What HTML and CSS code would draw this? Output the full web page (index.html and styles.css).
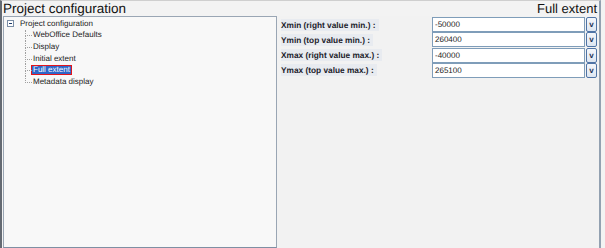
FILE: index.html
```html
<!DOCTYPE html>
<html lang="en">
<head>
    <meta charset="UTF-8">
    <meta name="viewport" content="width=device-width, initial-scale=1.0">
    <title>Project configuration</title>
    <link rel="stylesheet" href="styles.css">
</head>
<body>
    <div class="window">
        <div class="header">
            <span class="title">Project configuration</span>
            <span class="subtitle">Full extent</span>
        </div>

        <div class="main">
            <div class="tree">
                <div class="root">
                    <span class="expander"></span>
                    <span class="node">Project configuration</span>
                </div>
                <ul class="children">
                    <li><span class="node">WebOffice Defaults</span></li>
                    <li><span class="node">Display</span></li>
                    <li><span class="node">Initial extent</span></li>
                    <li><span class="node selected">Full extent</span></li>
                    <li><span class="node">Metadata display</span></li>
                </ul>
            </div>

            <div class="pane">
                <div class="form">
                    <span class="label">Xmin (right value min.) :</span>
                    <div class="value">-50000</div>
                    <div class="drop">v</div>

                    <span class="label">Ymin (top value min.) :</span>
                    <div class="value">260400</div>
                    <div class="drop">v</div>

                    <span class="label">Xmax (right value max.) :</span>
                    <div class="value">-40000</div>
                    <div class="drop">v</div>

                    <span class="label">Ymax (top value max.) :</span>
                    <div class="value">265100</div>
                    <div class="drop">v</div>
                </div>
            </div>
        </div>
    </div>
</body>
</html>
```

FILE: styles.css
```css
body {
    margin: 0;
    padding: 0;
    background: #f3f3f3;
    font-family: "Liberation Sans", Arial, sans-serif;
    color: #1a1a1a;
    text-rendering: geometricPrecision;
}

.window {
    width: 601px;
    height: 248px;
    box-sizing: border-box;
    border-left: 2px solid #646a72;
    border-right: 2px solid #93a1b1;
    border-top: 1px solid #cfcfcf;
    display: flex;
    flex-direction: column;
}

.header {
    height: 15px;
    display: flex;
    justify-content: space-between;
    align-items: center;
    font-size: 13.5px;
    line-height: 15px;
    color: #111;
}

.title {
    padding-left: 1px;
}

.subtitle {
    padding-right: 2px;
    font-size: 13px;
}

.main {
    flex: 1;
    display: flex;
}

/* дерево слева */
.tree {
    width: 274px;
    margin-left: 1px;
    box-sizing: border-box;
    background: #f8f8f8;
    border: 1px solid #9aa6b4;
    border-bottom-color: #7f8fa3;
    box-shadow: 1px 0 0 #c9d6e4;
    padding-top: 1px;
    font-size: 8px;
}

.root {
    height: 11.6px;
    display: flex;
    align-items: center;
}

.expander {
    width: 5px;
    height: 5px;
    margin-left: 3px;
    margin-right: 4px;
    border: 1px solid #7b8ea6;
    background: #fff;
    display: flex;
    align-items: center;
    justify-content: center;
}

.expander::after {
    content: '';
    width: 3px;
    height: 1px;
    background: #1c3a6a;
}

.children {
    list-style: none;
    margin: 0;
    padding: 0 0 0 21px;
}

.children li {
    position: relative;
    height: 11.6px;
    padding-left: 6px;
    display: flex;
    align-items: center;
}

.children li::before {
    content: '';
    position: absolute;
    left: 0;
    top: 0;
    width: 6px;
    height: 50%;
    border-left: 1px dotted #a0a0a0;
    border-bottom: 1px dotted #a0a0a0;
}

.children li:not(:last-child)::after {
    content: '';
    position: absolute;
    left: 0;
    top: 50%;
    height: 50%;
    border-left: 1px dotted #a0a0a0;
}

.node {
    padding: 0 1px;
    border: 1px solid transparent;
    line-height: 8px;
    color: #222;
}

.node.selected {
    background: #2f66c8;
    color: #fff;
    border-color: #e3141c;
}

/* форма справа */
.pane {
    flex: 1;
    padding-left: 4px;
    padding-top: 1px;
    background: #f2f2f2;
}

.form {
    display: grid;
    grid-template-columns: 150px 153px 11px;
    column-gap: 1px;
    row-gap: 0.3px;
    align-items: center;
}

.label {
    justify-self: start;
    font-size: 8.3px;
    font-weight: bold;
    color: #1d1d2b;
    background: #e8ebf0;
    padding: 1px 3px 1px 0;
}

.value {
    height: 15px;
    box-sizing: border-box;
    border: 1px solid #7f9db9;
    background: #fff;
    font-size: 8px;
    line-height: 13px;
    padding-left: 2px;
    color: #222;
}

.drop {
    height: 15px;
    box-sizing: border-box;
    border: 1px solid #4f74a6;
    border-radius: 2px;
    background: linear-gradient(#f4f7fb, #dde6f1);
    font-size: 8px;
    font-weight: bold;
    line-height: 13px;
    text-align: center;
    color: #1b2f55;
}
```
